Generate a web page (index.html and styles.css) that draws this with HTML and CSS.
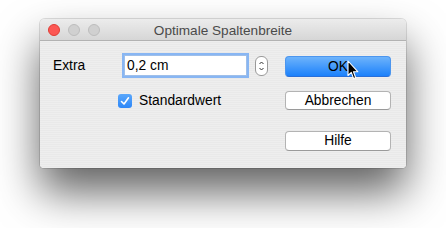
FILE: index.html
```html
<!DOCTYPE html>
<html lang="de">
<head>
<meta charset="utf-8">
<title>Optimale Spaltenbreite</title>
<link rel="stylesheet" href="styles.css">
</head>
<body>
<div class="window">
  <div class="titlebar">
    <div class="lights">
      <span class="light red"></span>
      <span class="light gray"></span>
      <span class="light gray"></span>
    </div>
    <div class="title">Optimale Spaltenbreite</div>
  </div>
  <div class="content">
    <div class="form">
      <div class="row">
        <span class="label">Extra</span>
        <div class="field">0,2 cm</div>
        <div class="stepper">
          <svg width="13" height="20" viewBox="0 0 13 20"><path d="M4.5 8 L6.5 6 L8.5 8" fill="none" stroke="#333" stroke-width="1"/><path d="M4.5 12 L6.5 14 L8.5 12" fill="none" stroke="#333" stroke-width="1"/></svg>
        </div>
      </div>
      <label class="check">
        <span class="box">
          <svg width="14" height="14" viewBox="0 0 14 14"><path d="M3.5 7.5 L6 10 L10.5 3.8" fill="none" stroke="#fff" stroke-width="1.6" stroke-linecap="round" stroke-linejoin="round"/></svg>
        </span>
        <span>Standardwert</span>
      </label>
    </div>
    <div class="buttons">
      <div class="btn primary">OK</div>
      <div class="btn second">Abbrechen</div>
      <div class="btn third">Hilfe</div>
    </div>
  </div>
  <svg class="cursor" width="13" height="21" viewBox="0 0 13 21"><path d="M1 1 L1 15.5 L4.3 12.4 L6.6 18.6 L8.7 17.7 L6.5 11.7 L10.8 11.7 Z" fill="#000" stroke="#fff" stroke-width="1.1" stroke-linejoin="round"/></svg>
</div>
</body>
</html>
```
FILE: styles.css
```css
html {
  margin: 0;
  height: 100%;
  background: #ffffff;
}
body {
  margin: 0;
  min-height: 228px;
  box-sizing: border-box;
  padding: 19px 0 0 40px;
  font-family: "Liberation Sans", Arial, sans-serif;
  font-size: 13.8px;
  color: #000;
}
.window {
  position: relative;
  width: 366px;
  height: 149px;
  border-radius: 5px 5px 4px 4px;
  background: repeating-linear-gradient(to bottom, #eeeeee 0 1px, #e9e9e9 1px 2px);
  box-shadow: 0 0 0 1px rgba(0,0,0,0.12), 0 24px 44px rgba(0,0,0,0.62);
}
.titlebar {
  height: 21px;
  border-bottom: 1px solid #b2b2b2;
  border-radius: 5px 5px 0 0;
  background: linear-gradient(to bottom, #ececec, #d6d6d6);
  display: flex;
  align-items: center;
  position: relative;
}
.lights {
  display: flex;
  gap: 8px;
  padding-left: 8px;
  padding-top: 1px;
}
.light {
  width: 12px;
  height: 12px;
  border-radius: 50%;
  box-sizing: border-box;
}
.red {
  background: #fc5753;
  border: 1px solid #df3d35;
}
.gray {
  background: #d0d0d0;
  border: 1px solid #bdbdbd;
}
.title {
  position: absolute;
  left: 0;
  right: 0;
  text-align: center;
  color: #4a4a4a;
  font-size: 13.6px;
  top: 4px;
}
.content {
  display: flex;
}
.form {
  flex-shrink: 0;
  padding: 14px 0 0 13px;
  width: 215px;
}
.row {
  display: flex;
  align-items: center;
}
.label {
  width: 71px;
  flex-shrink: 0;
}
.field {
  flex-shrink: 0;
  width: 123px;
  height: 21px;
  box-sizing: border-box;
  border: 1px solid #9fbfe9;
  background: #fff;
  box-shadow: 0 0 0 2px #88b6f3;
  padding: 2px 0 0 2px;
}
.stepper {
  flex-shrink: 0;
  margin-left: 8px;
  width: 13px;
  height: 20px;
  box-sizing: border-box;
  border: 1px solid #9a9a9a;
  border-radius: 6px;
  background: #fff;
  display: flex;
}
.stepper svg {
  margin: -1px;
}
.check {
  display: flex;
  align-items: center;
  margin: 17px 0 0 65px;
  gap: 7px;
}
.box {
  width: 14px;
  height: 14px;
  border-radius: 3px;
  background: linear-gradient(#5aa7fb, #2d87f8);
  display: flex;
}
.buttons {
  flex-shrink: 0;
  display: flex;
  flex-direction: column;
  padding-top: 15px;
  margin-left: 17px;
}
.btn {
  width: 106px;
  box-sizing: border-box;
  border-radius: 4px;
  text-align: center;
  background: #fff;
  border: 1px solid #b3b3b3;
  border-bottom-color: #9a9a9a;
}
.primary {
  height: 21px;
  line-height: 19px;
  background: linear-gradient(to bottom, #6db3fb, #1c81fb);
  border-color: #4b95ee #4b95ee #2a6fd8;
}
.second {
  margin-top: 14px;
  height: 19px;
  line-height: 17px;
}
.third {
  margin-top: 21px;
  height: 20px;
  line-height: 18px;
}
.cursor {
  position: absolute;
  left: 307px;
  top: 41px;
}
```
